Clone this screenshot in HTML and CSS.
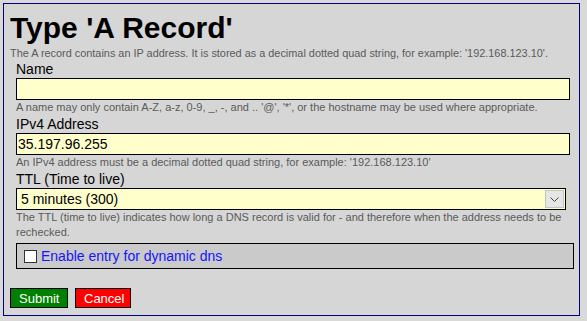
FILE: index.html
```html
<!DOCTYPE html>
<html lang="en">
<head>
    <meta charset="UTF-8">
    <meta name="viewport" content="width=device-width, initial-scale=1.0">
    <title>Type 'A Record'</title>
    <link rel="stylesheet" href="styles.css">
</head>
<body>
    <div class="record-box">
        <h1>Type 'A Record'</h1>
        <p class="intro">The A record contains an IP address. It is stored as a decimal dotted quad string, for example: '192.168.123.10'.</p>

        <form id="record-form" action="#" method="POST">
            <div class="fields">
                <div class="form-group">
                    <label for="name">Name</label>
                    <input type="text" id="name" name="name">
                    <p class="hint">A name may only contain A-Z, a-z, 0-9, _, -, and .. '@', '*', or the hostname may be used where appropriate.</p>
                </div>

                <div class="form-group">
                    <label for="address">IPv4 Address</label>
                    <input type="text" id="address" name="address" value="35.197.96.255">
                    <p class="hint">An IPv4 address must be a decimal dotted quad string, for example: '192.168.123.10'</p>
                </div>

                <div class="form-group">
                    <label for="ttl">TTL (Time to live)</label>
                    <div class="select-wrap">
                        <select id="ttl" name="ttl">
                            <option value="60">1 minute (60)</option>
                            <option value="300" selected>5 minutes (300)</option>
                            <option value="3600">1 hour (3600)</option>
                            <option value="86400">1 day (86400)</option>
                        </select>
                        <span class="select-arrow">
                            <svg width="9" height="5" viewBox="0 0 9 5"><path d="M0.5 0.5 L4.5 4.5 L8.5 0.5" fill="none" stroke="#444" stroke-width="1"/></svg>
                        </span>
                    </div>
                    <p class="hint">The TTL (time to live) indicates how long a DNS record is valid for - and therefore when the address needs to be rechecked.</p>
                </div>

                <div class="dyndns">
                    <input type="checkbox" id="dyndns" name="dyndns">
                    <label for="dyndns">Enable entry for dynamic dns</label>
                </div>
            </div>

            <div class="actions">
                <button type="submit" class="btn-submit">Submit</button>
                <button type="button" class="btn-cancel">Cancel</button>
            </div>
        </form>
    </div>
</body>
</html>
```

FILE: styles.css
```css
body {
    font-family: "Liberation Sans", Arial, sans-serif;
    margin: 3px;
    background: #d9d9d9;
}

.record-box {
    box-sizing: border-box;
    width: 577px;
    background: #d6d6d6;
    border: 1px solid #000080;
    padding: 7px 6px 7px 6px;
}

h1 {
    font-size: 30px;
    line-height: 34px;
    margin: 0;
    color: #000;
}

.intro {
    font-size: 10.9px;
    line-height: 14px;
    margin: 1px 0 0;
    color: #5a5a5a;
}

.fields {
    padding-left: 6px;
}

.form-group label {
    display: block;
    font-size: 14px;
    line-height: 18px;
    color: #000;
}

.form-group input[type="text"] {
    display: block;
    box-sizing: border-box;
    width: 554px;
    height: 22px;
    margin: 0;
    padding: 0 1px;
    border: 1px solid #000;
    border-radius: 0;
    background: #ffffcc;
    font-family: "Liberation Sans", Arial, sans-serif;
    font-size: 14px;
    color: #000;
    outline: none;
}

.select-wrap {
    box-sizing: border-box;
    display: flex;
    width: 550px;
    height: 22px;
    border: 1px solid #000;
    background: #ffffcc;
}

.select-wrap select {
    flex: 1;
    appearance: none;
    -webkit-appearance: none;
    border: none;
    border-radius: 0;
    background: transparent;
    margin: 0;
    padding: 0 4px;
    font-family: "Liberation Sans", Arial, sans-serif;
    font-size: 14px;
    color: #000;
    outline: none;
}

.select-arrow {
    display: flex;
    align-items: center;
    justify-content: center;
    width: 17px;
    margin: 1px 1px 1px 0;
    background: #e6e6e6;
    border: 1px solid #c4c4c4;
}

.hint {
    font-size: 11px;
    line-height: 15px;
    margin: 0;
    color: #5a5a5a;
}

.dyndns {
    box-sizing: border-box;
    display: flex;
    align-items: center;
    width: 558px;
    height: 26px;
    margin-top: 3px;
    padding-left: 7px;
    border: 1px solid #000;
    background: #cacaca;
}

.dyndns input[type="checkbox"] {
    appearance: none;
    -webkit-appearance: none;
    box-sizing: border-box;
    width: 13px;
    height: 13px;
    margin: 0 4px 0 0;
    border: 1px solid #333;
    background: #fff;
}

.dyndns label {
    font-size: 14px;
    line-height: 18px;
    color: #1414ff;
}

.actions {
    display: flex;
    gap: 7px;
    margin-top: 19px;
}

.actions button {
    box-sizing: border-box;
    height: 20px;
    padding: 0 8px;
    border: 1px solid #000;
    border-radius: 0;
    color: #fff;
    font-family: "Liberation Sans", Arial, sans-serif;
    font-size: 13px;
    cursor: pointer;
}

.btn-submit {
    width: 58px;
    background: #008000;
}

.btn-cancel {
    width: 56px;
    background: #ff0000;
}
```
